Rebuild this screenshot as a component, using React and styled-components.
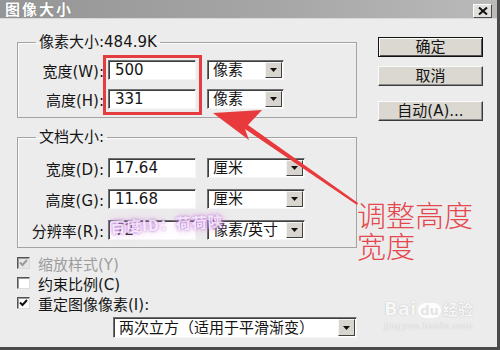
import React from "react";
import styled, { createGlobalStyle } from "styled-components";

const Global = createGlobalStyle`
  html, body { margin: 0; padding: 0; background: #fff; }
  body { width: 500px; height: 350px; overflow: hidden; }
`;

const Window = styled.div`
  position: relative;
  width: 500px;
  height: 350px;
  box-sizing: border-box;
  background: #ececec;
  border-right: 3px solid #4b4b4b;
  border-bottom: 3px solid #4b4b4b;
  display: flex;
  flex-direction: column;
  font-family: "DejaVu Sans", "Noto Sans CJK SC", sans-serif;
  font-size: 15px;
  color: #151515;
  overflow: hidden;
`;

const TitleBar = styled.div`
  height: 18px;
  flex: none;
  display: flex;
  align-items: center;
  justify-content: space-between;
  padding: 0 5px 0 5px;
  background: linear-gradient(to right, #959595, #a6a6a6 55%, #bababa);
  border-bottom: 1px solid #d8d8d8;
`;

const Title = styled.span`
  color: #fff;
  font-weight: bold;
  font-size: 15px;
  letter-spacing: 2px;
  line-height: 18px;
  font-family: "Noto Sans CJK SC", sans-serif;
  text-shadow: 0 0 1px #6a6a6a;
`;

const CloseBtn = styled.div`
  width: 19px;
  height: 14px;
  margin-top: 4px;
  box-sizing: border-box;
  background: #e2e0dc;
  border: 1px solid;
  border-color: #fff #4a4a4a #4a4a4a #fff;
  display: flex;
  align-items: center;
  justify-content: center;
`;

const Body = styled.div`
  flex: 1;
  display: flex;
  gap: 21px;
  padding: 14px 0 0 17px;
`;

const LeftCol = styled.div`
  width: 340px;
  display: flex;
  flex-direction: column;
`;

const RightCol = styled.div`
  width: 105px;
  display: flex;
  flex-direction: column;
  padding-top: 4px;
`;

const Group = styled.fieldset`
  margin: ${(p) => p.$mt || 0}px 0 0;
  padding: ${(p) => p.$pt}px 0 ${(p) => p.$pb}px;
  border: 1px solid #a3a3a3;
  box-shadow: inset 1px 1px 0 #fafafa;
  min-width: 0;
  display: flex;
  flex-direction: column;
  gap: ${(p) => p.$gap}px;
`;

const Legend = styled.legend`
  margin-left: 18px;
  padding: 0 3px;
  line-height: 18px;
  font-size: 15px;
`;

const Row = styled.div`
  display: flex;
  align-items: center;
  height: 20px;
`;

const Label = styled.div`
  width: 86px;
  text-align: right;
  margin-right: 4px;
  white-space: nowrap;
`;

const Field = styled.div`
  width: 88px;
  height: 20px;
  box-sizing: border-box;
  background: #fff;
  border: 1px solid;
  border-color: #707070 #f6f6f6 #f6f6f6 #707070;
  box-shadow: inset 1px 1px 0 #3e3e3e;
  padding-left: 6px;
  line-height: 18px;
`;

const Select = styled.div`
  width: ${(p) => p.$w}px;
  height: ${(p) => p.$h || 20}px;
  margin-left: ${(p) => p.$ml ?? 11}px;
  margin-top: ${(p) => p.$mt || 0}px;
  box-sizing: border-box;
  background: #fff;
  border: 1px solid;
  border-color: #707070 #f6f6f6 #f6f6f6 #707070;
  box-shadow: inset 1px 1px 0 #3e3e3e;
  display: flex;
  align-items: center;
  justify-content: space-between;
  padding: 1px 1px 1px 5px;
  white-space: nowrap;
`;

const SelectText = styled.span`
  line-height: 18px;
  overflow: hidden;
`;

const DropBtn = styled.div`
  flex: none;
  width: 17px;
  height: 100%;
  box-sizing: border-box;
  background: #d8d5ce;
  border: 1px solid;
  border-color: #f4f4f4 #404040 #404040 #f4f4f4;
  display: flex;
  align-items: center;
  justify-content: center;
`;

const CheckRow = styled.div`
  display: flex;
  align-items: center;
  gap: 8px;
  height: 20px;
  margin-top: ${(p) => p.$mt || 0}px;
  color: ${(p) => (p.$disabled ? "#9d9d9d" : "#151515")};
`;

const Box = styled.div`
  width: 13px;
  height: 12px;
  box-sizing: border-box;
  background: ${(p) => (p.$disabled ? "#e6e6e6" : "#fff")};
  border: 1px solid;
  border-color: #555 #dcdcdc #dcdcdc #555;
  box-shadow: inset 1px 1px 0 #9a9a9a;
  display: flex;
  align-items: center;
  justify-content: center;
`;

const Button = styled.div`
  height: 20px;
  margin-top: ${(p) => p.$mt || 0}px;
  box-sizing: border-box;
  background: #dbd8d1;
  border: 1px solid;
  border-color: ${(p) => (p.$default ? "#111" : "#fbfbfb #3c3c3c #3c3c3c #fbfbfb")};
  box-shadow: ${(p) =>
    p.$default ? "inset 1px 1px 0 #fbfbfb, inset -1px -1px 0 #555" : "inset -1px -1px 0 #8a8a8a"};
  display: flex;
  align-items: center;
  justify-content: center;
  line-height: 18px;
`;

const Overlay = styled.svg`
  position: absolute;
  left: 0;
  top: 0;
  pointer-events: none;
`;

const RedBox = styled.div`
  position: absolute;
  left: 103px;
  top: 55px;
  width: 99px;
  height: 60px;
  box-sizing: border-box;
  border: 3px solid #e43c3f;
  pointer-events: none;
`;

const Note = styled.div`
  position: absolute;
  left: 357px;
  top: 199px;
  display: flex;
  flex-direction: column;
  font-family: "Noto Sans CJK SC", sans-serif;
  font-weight: 300;
  font-size: 29px;
  line-height: 30px;
  color: #e4474c;
  pointer-events: none;
`;

const NoteLine = styled.span`
  display: block;
  height: 31px;
`;

const Stamp = styled.div`
  position: absolute;
  left: 110px;
  top: 213px;
  font-family: "Noto Sans CJK SC", sans-serif;
  font-size: 15px;
  font-weight: bold;
  letter-spacing: 1px;
  color: rgba(255, 255, 255, 0.8);
  text-shadow: 0 0 3px rgba(170, 90, 210, 0.9), 0 0 8px rgba(225, 150, 230, 0.8);
  transform: rotate(-3deg);
  pointer-events: none;
`;

const Brand = styled.div`
  position: absolute;
  left: 384px;
  top: 298px;
  display: flex;
  flex-direction: column;
  align-items: center;
  color: rgba(255, 255, 255, 0.92);
  text-shadow: 0 0 1px rgba(0, 0, 0, 0.3);
  pointer-events: none;
`;

const BrandMain = styled.div`
  display: flex;
  align-items: flex-end;
  font-family: "DejaVu Sans", "Noto Sans CJK SC", sans-serif;
  font-size: 18px;
  font-weight: bold;
  line-height: 22px;
`;

const BrandCJK = styled.span`
  font-size: 15px;
  line-height: 20px;
`;

const BrandSub = styled.div`
  font-family: "DejaVu Serif", serif;
  font-size: 9px;
  line-height: 12px;
  letter-spacing: 0.3px;
`;

const PawBall = styled.span`
  display: inline-block;
  margin: 0 2px 2px;
  padding: 0 2px;
  border-radius: 9px;
  background: rgba(255, 255, 255, 0.9);
  color: #e4e4e4;
  font-size: 13px;
  line-height: 15px;
  text-shadow: none;
`;

const Arrow = () => (
  <svg width="7" height="4" viewBox="0 0 7 4">
    <path d="M0 0h7L3.5 4z" fill="#111" />
  </svg>
);

const Check = ({ color }) => (
  <svg width="9" height="8" viewBox="0 0 9 8">
    <path d="M1 3.5l2.5 2.5L8 1" fill="none" stroke={color} strokeWidth="2" />
  </svg>
);

const Sel = ({ w, children, ...rest }) => (
  <Select $w={w} {...rest}>
    <SelectText>{children}</SelectText>
    <DropBtn>
      <Arrow />
    </DropBtn>
  </Select>
);

export default function App() {
  return (
    <>
      <Global />
      <Window>
        <TitleBar>
          <Title>图像大小</Title>
          <CloseBtn>
            <svg width="10" height="8" viewBox="0 0 10 8">
              <path d="M1 0.5l8 7M9 0.5l-8 7" stroke="#111" strokeWidth="2" />
            </svg>
          </CloseBtn>
        </TitleBar>
        <Body>
          <LeftCol>
            <Group $pt={9} $pb={8} $gap={9}>
              <Legend>像素大小:484.9K</Legend>
              <Row>
                <Label>宽度(W):</Label>
                <Field>500</Field>
                <Sel w={77}>像素</Sel>
              </Row>
              <Row>
                <Label>高度(H):</Label>
                <Field>331</Field>
                <Sel w={77}>像素</Sel>
              </Row>
            </Group>
            <Group $mt={10} $pt={12} $pb={7} $gap={11}>
              <Legend>文档大小:</Legend>
              <Row>
                <Label>宽度(D):</Label>
                <Field>17.64</Field>
                <Sel w={98}>厘米</Sel>
              </Row>
              <Row>
                <Label>高度(G):</Label>
                <Field>11.68</Field>
                <Sel w={98}>厘米</Sel>
              </Row>
              <Row>
                <Label>分辨率(R):</Label>
                <Field>72</Field>
                <Sel w={98}>像素/英寸</Sel>
              </Row>
            </Group>
            <CheckRow $mt={5} $disabled>
              <Box $disabled>
                <Check color="#9a9a9a" />
              </Box>
              缩放样式(Y)
            </CheckRow>
            <CheckRow>
              <Box />
              约束比例(C)
            </CheckRow>
            <CheckRow>
              <Box>
                <Check color="#111" />
              </Box>
              重定图像像素(I):
            </CheckRow>
            <Sel w={244} $h={21} $ml={96} $mt={4}>
              两次立方（适用于平滑渐变）
            </Sel>
          </LeftCol>
          <RightCol>
            <Button $default>确定</Button>
            <Button $mt={9}>取消</Button>
            <Button $mt={15}>自动(A)...</Button>
          </RightCol>
        </Body>

        <RedBox />
        <Overlay width="500" height="350" viewBox="0 0 500 350">
          <polygon
            points="213,113 262,110 248,125 358,203 357,205 245,129 249,140"
            fill="#e83a3c"
          />
        </Overlay>
        <Note>
          <NoteLine>调整高度</NoteLine>
          <NoteLine>宽度</NoteLine>
        </Note>
        <Stamp>百度ID：荷荷陕</Stamp>
        <Brand>
          <BrandMain>
            Bai
            <PawBall>du</PawBall>
            <BrandCJK>经验</BrandCJK>
          </BrandMain>
          <BrandSub>jingyan.baidu.com</BrandSub>
        </Brand>
      </Window>
    </>
  );
}
